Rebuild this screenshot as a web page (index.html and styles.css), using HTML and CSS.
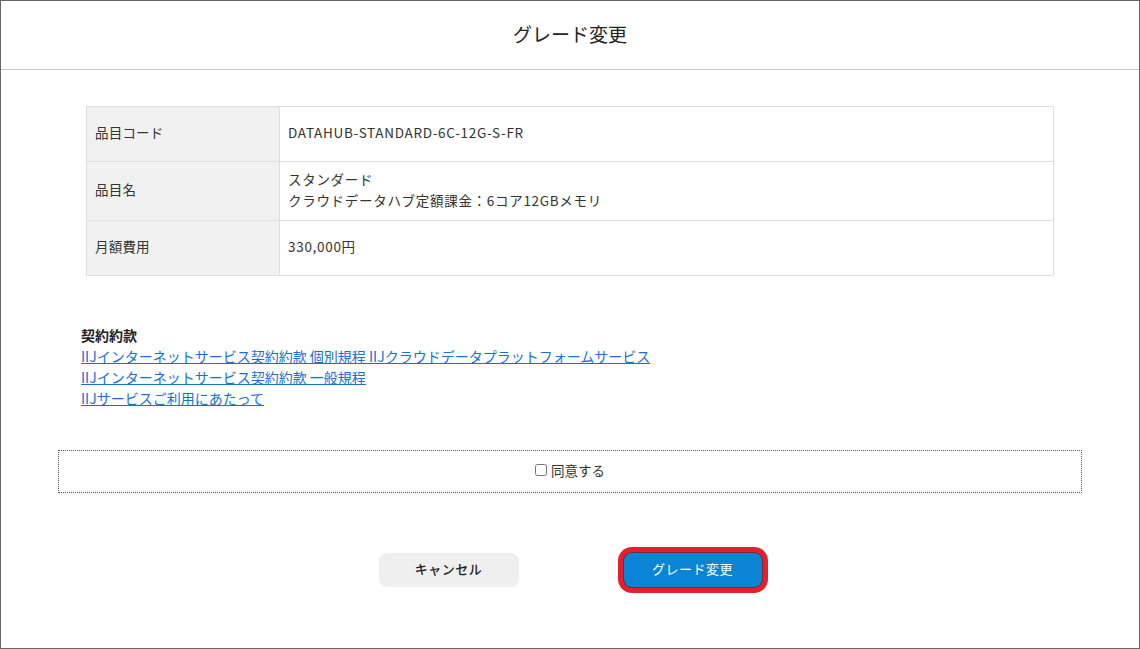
FILE: index.html
```html
<!DOCTYPE html>
<html lang="ja">
<head>
    <meta charset="UTF-8">
    <title>グレード変更</title>
    <link rel="stylesheet" href="styles.css">
</head>
<body>
    <div class="modal">
        <div class="modal-header">
            <h1>グレード変更</h1>
        </div>
        <div class="modal-body">
            <table class="item-table">
                <tr class="row-short">
                    <th>品目コード</th>
                    <td>DATAHUB-STANDARD-6C-12G-S-FR</td>
                </tr>
                <tr class="row-tall">
                    <th>品目名</th>
                    <td>スタンダード<br>クラウドデータハブ定額課金：6コア12GBメモリ</td>
                </tr>
                <tr class="row-short">
                    <th>月額費用</th>
                    <td>330,000円</td>
                </tr>
            </table>

            <div class="terms">
                <div class="terms-title">契約約款</div>
                <a href="#">IIJインターネットサービス契約約款 個別規程 IIJクラウドデータプラットフォームサービス</a>
                <a href="#">IIJインターネットサービス契約約款 一般規程</a>
                <a href="#">IIJサービスご利用にあたって</a>
            </div>

            <div class="agree-box">
                <label><input type="checkbox" id="agree">同意する</label>
            </div>

            <div class="button-row">
                <button class="btn btn-cancel">キャンセル</button>
                <button class="btn btn-primary">グレード変更</button>
            </div>
        </div>
    </div>
</body>
</html>
```

FILE: styles.css
```css
html, body {
    margin: 0;
    padding: 0;
}
body {
    font-family: "Noto Sans CJK JP", "Noto Sans", sans-serif;
    color: #333;
    background-color: #fff;
}
.modal {
    box-sizing: border-box;
    width: 1140px;
    height: 649px;
    border: 1px solid #666;
    background-color: #fff;
}
.modal-header {
    box-sizing: border-box;
    height: 69px;
    padding-bottom: 3px;
    border-bottom: 1px solid #c8c8c8;
    display: flex;
    align-items: center;
    justify-content: center;
}
.modal-header h1 {
    margin: 0;
    font-size: 19px;
    font-weight: normal;
    color: #222;
}
.modal-body {
    padding: 36px 0 0;
}
.item-table {
    width: 968px;
    margin: 0 auto;
    border-collapse: collapse;
    font-size: 13.5px;
    letter-spacing: 0.7px;
}
.item-table th,
.item-table td {
    border: 1px solid #dedede;
    padding: 0 8px 3px;
    text-align: left;
    font-weight: normal;
    line-height: 21px;
}
.item-table th {
    width: 176px;
    background-color: #f1f1f1;
    letter-spacing: 0.2px;
}
.row-short {
    height: 55px;
}
.row-tall {
    height: 59px;
}
.terms {
    margin: 49px 0 0 80px;
    font-size: 14px;
    line-height: 21px;
}
.terms-title {
    font-weight: bold;
    color: #222;
}
.terms a {
    display: table;
    color: #1a6fd6;
    text-decoration: underline;
}
.agree-box {
    margin: 41px 57px 0;
    height: 41px;
    border: 1px dotted #555;
    display: flex;
    align-items: center;
    justify-content: center;
    font-size: 13.5px;
}
.agree-box label {
    display: flex;
    align-items: center;
    padding-bottom: 3px;
}
.agree-box input {
    width: 12px;
    height: 12px;
    margin: 0 4px 0 0;
}
.button-row {
    margin-top: 60px;
    display: flex;
    justify-content: center;
    gap: 105px;
}
.btn {
    height: 34px;
    padding: 0 0 3px;
    border: none;
    border-radius: 8px;
    font-family: inherit;
    font-size: 13px;
    letter-spacing: 0.5px;
    cursor: pointer;
}
.btn-cancel {
    width: 140px;
    background-color: #efefef;
    color: #222;
    font-weight: 500;
}
.btn-primary {
    width: 138px;
    background-color: #0b84d6;
    color: #fff;
    box-shadow: 0 0 0 1px #7a2a30, 0 0 0 6px #e3202b;
}
```
